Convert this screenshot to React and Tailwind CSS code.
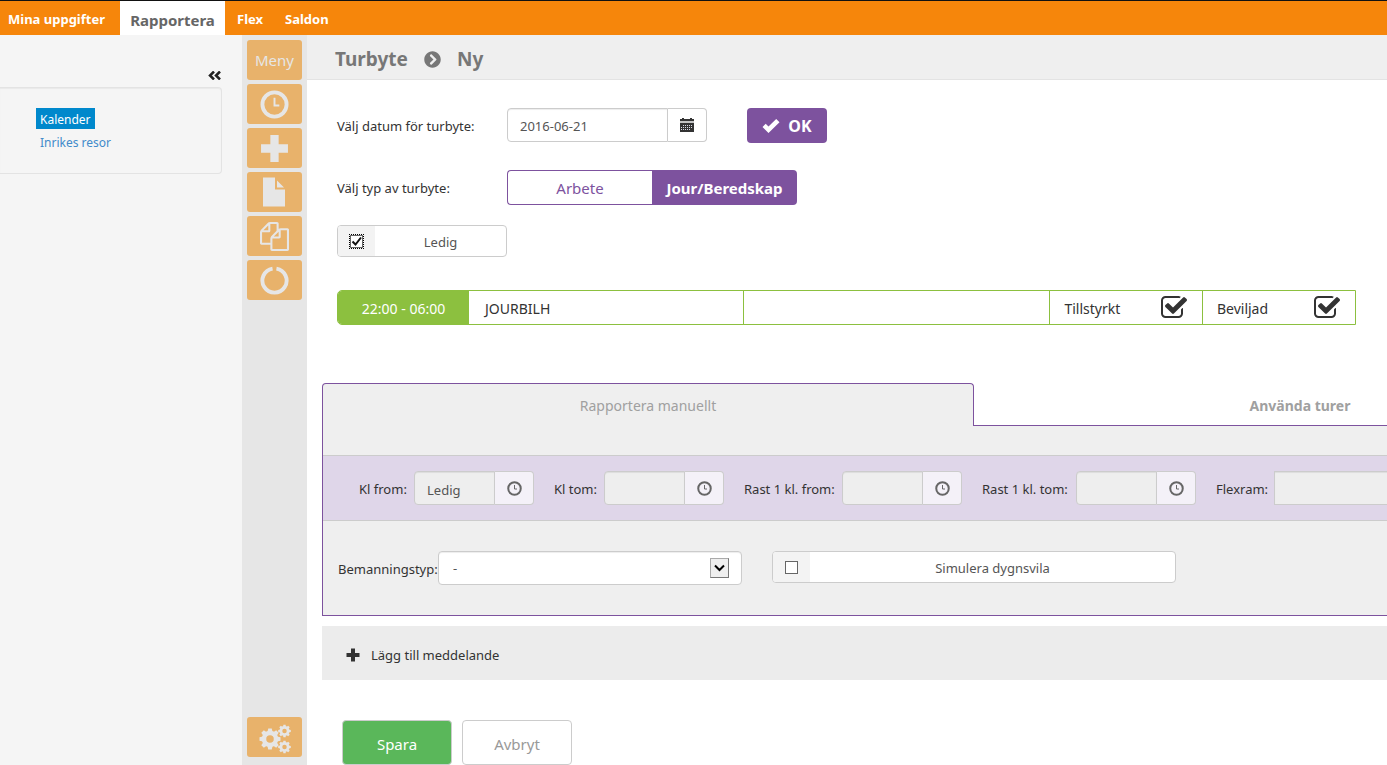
import { useState } from 'react';
import { FaChevronCircleRight } from 'react-icons/fa';

/* ---------- Icons ---------- */

function ClockIcon({ className }) {
    return (
        <svg viewBox="0 0 30 30" className={className} fill="none" stroke="currentColor" aria-hidden="true">
            <circle cx="15" cy="15" r="12.5" strokeWidth="4" />
            <path d="M15 8v8h5" strokeWidth="2" />
        </svg>
    );
}

function PlusIcon({ className }) {
    return (
        <svg viewBox="0 0 28 28" className={className} fill="currentColor" aria-hidden="true">
            <path d="M10 1h8v9h9v8h-9v9h-8v-9H1v-8h9z" />
        </svg>
    );
}

function FileIcon({ className }) {
    return (
        <svg viewBox="0 0 24 30" className={className} fill="currentColor" aria-hidden="true">
            <path d="M1 .5h12v12h10v17H1z" />
            <path d="M15 3.500l7 7h-7z" />
        </svg>
    );
}

function FilesIcon({ className }) {
    return (
        <svg viewBox="0 0 1792 1792" className={className} fill="currentColor" aria-hidden="true">
            <path d="M1696 384q40 0 68 28t28 68v1216q0 40-28 68t-68 28h-960q-40 0-68-28t-28-68v-288h-544q-40 0-68-28t-28-68v-672q0-40 20-88t48-76l408-408q28-28 76-48t88-20h416q40 0 68 28t28 68v328q68-40 128-40h416zm-544 213l-299 299h299v-299zm-640-384l-299 299h299v-299zm196 647l316-316v-416h-384v416q0 40-28 68t-68 28h-416v640h512v-256q0-40 20-88t48-76zm956 804v-1152h-384v416q0 40-28 68t-68 28h-416v640h896z" />
        </svg>
    );
}

function NotchIcon({ className }) {
    return (
        <svg viewBox="0 0 30 30" className={className} fill="none" stroke="currentColor" strokeWidth="4" aria-hidden="true">
            <path d="M17 2.700a12.500 12.500 0 1 1-4 0" />
        </svg>
    );
}

const teeth = [0, 45, 90, 135, 180, 225, 270, 315];

function Gear({ x, y, scale }) {
    return (
        <g transform={`translate(${x} ${y}) scale(${scale})`}>
            <circle r="6" fill="none" stroke="currentColor" strokeWidth="4.5" />
            {teeth.map((angle) => (
                <path key={angle} d="M-2.500 -7L-1.800 -10.500H1.800L2.500 -7z" transform={`rotate(${angle})`} />
            ))}
        </g>
    );
}

function GearsIcon({ className }) {
    return (
        <svg viewBox="0 0 32 30" className={className} fill="currentColor" aria-hidden="true">
            <Gear x={11} y={15} scale={1} />
            <Gear x={25.5} y={7} scale={0.6} />
            <Gear x={25.5} y={23} scale={0.6} />
        </svg>
    );
}

function CheckedBoxIcon({ className }) {
    return (
        <svg viewBox="0 0 1792 1792" className={className} fill="currentColor" role="img" aria-label="Ja">
            <path d="M1472 930v318q0 119-84.500 203.500t-203.500 84.500h-832q-119 0-203.500-84.500t-84.500-203.500v-832q0-119 84.500-203.500t203.500-84.500h832q63 0 117 25 15 7 18 23 3 17-9 29l-49 49q-10 10-23 10-3 0-9-2-23-6-45-6h-832q-66 0-113 47t-47 113v832q0 66 47 113t113 47h832q66 0 113-47t47-113v-254q0-13 9-22l64-64q10-10 23-10 6 0 12 3 20 8 20 29zm231-489l-814 814q-24 24-57 24t-57-24l-430-430q-24-24-24-57t24-57l110-110q24-24 57-24t57 24l263 263 647-647q24-24 57-24t57 24l110 110q24 24 24 57t-24 57z" />
        </svg>
    );
}

function OkIcon({ className }) {
    return (
        <svg viewBox="0 0 18 16" className={className} fill="currentColor" aria-hidden="true">
            <path d="M14.200 1l3.300 3.200L6.500 15 .5 9l3.200-3.200 2.800 2.700z" />
        </svg>
    );
}

function CalendarIcon({ className }) {
    return (
        <svg viewBox="0 0 14 14" className={className} fill="currentColor" aria-hidden="true">
            <path d="M2 0h2v1h6V0h2v1h2v2H0V1h2z" />
            <path d="M0 3h14v2H0z" fill="#c4c4c4" />
            <path d="M0 5h14v9H0z" />
            <path
                d="M3 7h1v1H3zM5 7h1v1H5zM7 7h1v1H7zM9 7h1v1H9zM11 7h1v1h-1zM1 9h1v1H1zM3 9h1v1H3zM5 9h1v1H5zM7 9h1v1H7zM9 9h1v1H9zM11 9h1v1h-1zM1 11h1v1H1zM3 11h1v1H3zM5 11h1v1H5zM7 11h1v1H7zM9 11h1v1H9z"
                fill="#d8d8e4"
            />
        </svg>
    );
}

/* ---------- Form parts ---------- */

function TimeField({ id, label, labelWidth, defaultValue = '' }) {
    return (
        <div className="flex shrink-0 items-center">
            <label htmlFor={id} className={`${labelWidth} shrink-0 whitespace-nowrap pt-1`}>
                {label}
            </label>
            <input
                id={id}
                type="text"
                defaultValue={defaultValue}
                className="h-[34px] w-[81px] rounded-l border border-[#ccc] bg-[#eee] px-3 pt-1 text-[#555] shadow-[inset_0_1px_1px_rgba(0,0,0,0.075)] outline-none"
            />
            <button
                type="button"
                aria-label={`Välj tid, ${label}`}
                className="flex h-[34px] w-[39px] items-center justify-center rounded-r border border-l-0 border-[#ccc] bg-[#f4f1f8] text-[#666]"
            >
                <ClockIcon className="h-[15px] w-[15px]" />
            </button>
        </div>
    );
}

function CheckField({ label, checked, onChange, width, focused }) {
    return (
        <label className={`${width} flex h-8 shrink-0 overflow-hidden rounded border border-[#ccc] bg-white text-[#555]`}>
            <span className="grid w-[37px] shrink-0 place-items-center bg-[#f3f3f3]">
                <input
                    type="checkbox"
                    checked={checked}
                    onChange={onChange}
                    className={`col-start-1 row-start-1 h-[13px] w-[13px] appearance-none border border-[#666] bg-white ${focused ? 'outline-1 outline-dotted outline-black' : 'outline-none'}`}
                />
                {checked && (
                    <svg viewBox="0 0 13 13" className="pointer-events-none col-start-1 row-start-1 h-[13px] w-[13px]" fill="none" stroke="#111" strokeWidth="2" aria-hidden="true">
                        <path d="M2.500 6.500l3 3 5.500-7" />
                    </svg>
                )}
            </span>
            <span className="flex-1 self-center pt-1 text-center">{label}</span>
        </label>
    );
}

/* ---------- Page parts ---------- */

const menuItems = [
    { name: 'Tid', icon: <ClockIcon className="h-[29px] w-[29px]" /> },
    { name: 'Lägg till', icon: <PlusIcon className="h-[29px] w-[29px]" /> },
    { name: 'Dokument', icon: <FileIcon className="mr-0.5 h-[30px] w-6" /> },
    { name: 'Kopiera', icon: <FilesIcon className="h-[29px] w-[29px]" /> },
    { name: 'Uppdatera', icon: <NotchIcon className="h-[29px] w-[29px]" /> },
];

const menuButton = 'flex h-10 w-[55px] shrink-0 items-center justify-center rounded-[3px] bg-[#e8b26b] text-[#e6e6e6]';

function TopNav() {
    return (
        <nav className="flex h-[35px] shrink-0 border-t border-[#111] bg-[#f6860b] text-[13px] font-bold text-white">
            <a href="#mina" className="flex w-[120px] items-center pl-2 pt-1">Mina uppgifter</a>
            <a href="#rapportera" className="flex w-[105px] items-center justify-center bg-white pt-1 text-[15px] text-[#666]">Rapportera</a>
            <a href="#flex" className="flex w-12 items-center pl-3 pt-1">Flex</a>
            <a href="#saldon" className="flex items-center pl-3 pt-1">Saldon</a>
        </nav>
    );
}

function Sidebar() {
    return (
        <aside className="w-[242px] shrink-0 bg-[#f5f5f5] pt-7">
            <div className="flex h-6 justify-end pr-[21px]">
                <button type="button" aria-label="Dölj panel" className="text-[#222]">
                    <svg viewBox="0 0 13 9" className="h-[9px] w-[13px]" fill="none" stroke="currentColor" strokeWidth="2.500" aria-hidden="true">
                        <path d="M6 .5l-4 4 4 4M12 .5l-4 4 4 4" />
                    </svg>
                </button>
            </div>
            <div className="mr-5 flex h-[87px] flex-col items-start rounded-r border border-l-0 border-[#e3e3e3] pl-9 pt-5 text-[12px] shadow-[inset_0_1px_1px_rgba(0,0,0,0.05)]">
                <a href="#kalender" className="flex h-[21px] items-center bg-[#0088cc] px-1 pt-0.5 text-white">Kalender</a>
                <a href="#inrikes" className="flex h-[26px] items-center px-1 pt-0.5 text-[#428bca]">Inrikes resor</a>
            </div>
        </aside>
    );
}

function IconMenu() {
    return (
        <div className="flex w-[65px] shrink-0 flex-col items-center gap-1 bg-[#e6e6e6] pb-2 pt-[5px]">
            <button type="button" className={`${menuButton} text-[15px]`}>Meny</button>
            {menuItems.map((item) => (
                <button key={item.name} type="button" aria-label={item.name} className={menuButton}>
                    {item.icon}
                </button>
            ))}
            <button type="button" aria-label="Inställningar" className={`${menuButton} mt-auto pt-1`}>
                <GearsIcon className="h-[30px] w-8" />
            </button>
        </div>
    );
}

function ShiftRow() {
    return (
        <div className="mr-[31px] ml-[30px] mt-[33px] overflow-hidden rounded-l-[5px] border border-[#8cc03f]">
            <table className="w-full table-fixed border-collapse text-sm">
                <tbody>
                    <tr className="h-[33px]">
                        <td className="w-[131px] bg-[#8cc03f] pt-0.5 text-center text-white">22:00 - 06:00</td>
                        <td className="w-[27%] pl-4 pt-0.5">JOURBILH</td>
                        <td className="border-l border-[#8cc03f]"></td>
                        <td className="w-[15%] border-l border-[#8cc03f] px-[14px]">
                            <div className="flex items-center justify-between">
                                <span className="pt-0.5">Tillstyrkt</span>
                                <CheckedBoxIcon className="h-7 w-7" />
                            </div>
                        </td>
                        <td className="w-[15%] border-l border-[#8cc03f] px-[14px]">
                            <div className="flex items-center justify-between">
                                <span className="pt-0.5">Beviljad</span>
                                <CheckedBoxIcon className="h-7 w-7" />
                            </div>
                        </td>
                    </tr>
                </tbody>
            </table>
        </div>
    );
}

export default function App() {
    const [ledig, setLedig] = useState(true);
    const [simulera, setSimulera] = useState(false);

    return (
        <div className="flex min-h-screen flex-col overflow-hidden bg-white font-['Noto_Sans','Open_Sans',sans-serif] text-[13px] text-[#333]">
            <TopNav />
            <div className="flex flex-1">
                <Sidebar />
                <IconMenu />
                <main className="min-w-0 flex-1 overflow-hidden">
                    <header className="flex h-[45px] items-center gap-4 border-b border-[#e3e3e3] bg-[#efefef] pl-7 pt-1 text-[19px] font-bold text-[#777]">
                        <span>Turbyte</span>
                        <FaChevronCircleRight className="h-[17px] w-[17px]" />
                        <h1>Ny</h1>
                    </header>

                    <div className="mt-7 flex h-[35px] pl-[30px]">
                        <label htmlFor="datum" className="w-[170px] shrink-0 self-center pt-0.5">Välj datum för turbyte:</label>
                        <input
                            id="datum"
                            type="text"
                            defaultValue="2016-06-21"
                            className="h-[34px] w-[161px] rounded-l border border-[#ccc] px-3 pt-0.5 text-[#555] shadow-[inset_0_1px_1px_rgba(0,0,0,0.075)] outline-none"
                        />
                        <button type="button" aria-label="Öppna kalender" className="flex h-[34px] w-[39px] items-center justify-center rounded-r border border-l-0 border-[#ccc] bg-white">
                            <CalendarIcon className="h-[14px] w-[14px]" />
                        </button>
                        <button type="button" className="ml-10 flex h-[35px] w-20 items-center justify-center gap-2 rounded bg-[#7d529e] text-base font-bold text-white">
                            <OkIcon className="h-4 w-[18px]" />
                            OK
                        </button>
                    </div>

                    <div className="mt-[27px] flex h-[35px] pl-[30px]">
                        <span className="w-[170px] shrink-0 self-center pt-0.5">Välj typ av turbyte:</span>
                        <button type="button" className="w-[145px] rounded-l border border-r-0 border-[#7d529e] pt-0.5 text-[15px] text-[#7d529e]">Arbete</button>
                        <button type="button" className="w-[145px] rounded-r bg-[#7d529e] pt-0.5 text-[15px] font-bold text-white">Jour/Beredskap</button>
                    </div>

                    <div className="mt-5 pl-[30px]">
                        <CheckField label="Ledig" checked={ledig} onChange={() => setLedig(!ledig)} width="w-[170px]" focused />
                    </div>

                    <ShiftRow />

                    {/* Tabs and panel continue past the right edge */}
                    <div className="ml-[15px] mt-[58px] min-w-[1304px]">
                        <div role="tablist" className="flex text-sm text-[#a0a0a0]">
                            <button type="button" role="tab" aria-selected="true" className="h-[43px] w-1/2 rounded-t border border-b-0 border-[#7d529e] bg-[#efefef] pt-0.5">
                                Rapportera manuellt
                            </button>
                            <button type="button" role="tab" aria-selected="false" className="h-[43px] w-1/2 border-b border-[#7d529e] pt-1 font-bold">
                                Använda turer
                            </button>
                        </div>
                        <div role="tabpanel" className="border border-t-0 border-[#7d529e] bg-[#efefef] pt-[29px]">
                            <div className="flex h-[66px] items-center gap-5 border-y border-[#ccc] bg-[#dfd6e9] pl-9">
                                <TimeField id="kl-from" label="Kl from:" labelWidth="w-[55px]" defaultValue="Ledig" />
                                <TimeField id="kl-tom" label="Kl tom:" labelWidth="w-[50px]" />
                                <TimeField id="rast-from" label="Rast 1 kl. from:" labelWidth="w-[98px]" />
                                <TimeField id="rast-tom" label="Rast 1 kl. tom:" labelWidth="w-[94px]" />
                                <div className="flex flex-1 items-center">
                                    <label htmlFor="flexram" className="w-[58px] shrink-0 pt-1">Flexram:</label>
                                    <input id="flexram" type="text" className="h-[34px] flex-1 border border-[#ccc] bg-[#eee] px-3 shadow-[inset_0_1px_1px_rgba(0,0,0,0.075)] outline-none" />
                                </div>
                            </div>
                            <div className="flex h-[94px] items-start pl-[15px] pt-[30px]">
                                <label htmlFor="bemanning" className="w-[100px] shrink-0 whitespace-nowrap pt-[9px]">Bemanningstyp:</label>
                                <div className="relative w-[304px]">
                                    <select id="bemanning" className="h-[34px] w-full appearance-none rounded border border-[#ccc] bg-white px-[14px] pt-0.5 text-[#555] shadow-[inset_0_1px_1px_rgba(0,0,0,0.075)] outline-none">
                                        <option>-</option>
                                    </select>
                                    <span className="pointer-events-none absolute right-[13px] top-[7px] flex h-5 w-[19px] items-center justify-center border border-[#777] border-l-[#aaa] border-t-[#aaa] bg-[#efefef]">
                                        <svg viewBox="0 0 11 8" className="h-2 w-[11px]" fill="none" stroke="#000" strokeWidth="2" aria-hidden="true">
                                            <path d="M1 1.500l4.500 4.500L10 1.500" />
                                        </svg>
                                    </span>
                                </div>
                                <div className="ml-[30px]">
                                    <CheckField label="Simulera dygnsvila" checked={simulera} onChange={() => setSimulera(!simulera)} width="w-[404px]" />
                                </div>
                            </div>
                        </div>
                        <button type="button" className="mt-[10px] flex h-[54px] w-full items-center gap-[11px] bg-[#ececec] pl-6 pt-1">
                            <PlusIcon className="h-[14px] w-[14px]" />
                            <span className="pt-0.5">Lägg till meddelande</span>
                        </button>
                    </div>

                    <div className="mt-10 flex gap-[10px] pl-[35px] text-[15px]">
                        <button type="submit" className="h-[45px] w-[110px] rounded border border-[#ccc] bg-[#5ab75a] pt-1 text-white">Spara</button>
                        <button type="button" className="h-[45px] w-[110px] rounded border border-[#ccc] bg-white pt-1 text-[#999]">Avbryt</button>
                    </div>
                </main>
            </div>
        </div>
    );
}
